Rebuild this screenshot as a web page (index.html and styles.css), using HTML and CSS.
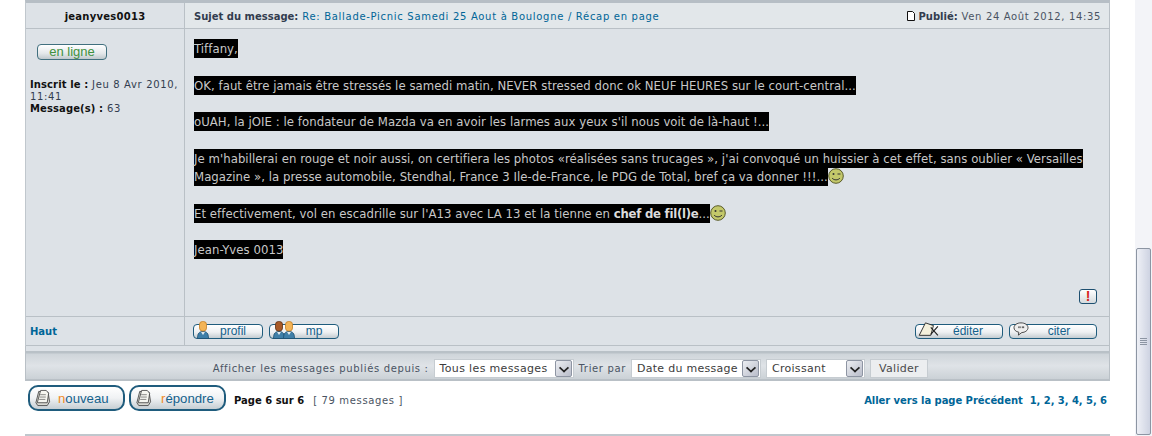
FILE: index.html
```html
<!DOCTYPE html>
<html lang="fr">
<head>
<meta charset="utf-8">
<title>Ballade-Picnic</title>
<link rel="stylesheet" href="styles.css">
</head>
<body>
<svg class="defs" width="0" height="0" aria-hidden="true">
  <defs>
    <symbol id="user" viewBox="0 0 12 18">
      <path d="M.5 17.500c0-5 1.500-7 5.500-7s5.500 2 5.500 7z" fill="#3f7fa8" stroke="#1d4f70" stroke-width=".8"/>
      <path d="M4 11l2 3 2-3z" fill="#dfeaf0"/>
      <rect x="2.500" y=".5" width="7" height="9.500" rx="3" fill="#f3b457" stroke="#c47f24" stroke-width=".8"/>
    </symbol>
    <symbol id="user2" viewBox="0 0 12 18">
      <path d="M.5 17.500c0-5 1.500-7 5.500-7s5.500 2 5.500 7z" fill="#3f7fa8" stroke="#1d4f70" stroke-width=".8"/>
      <path d="M4 11l2 3 2-3z" fill="#dfeaf0"/>
      <rect x="2.500" y=".5" width="7" height="9.500" rx="3" fill="#a85a28" stroke="#5d2f12" stroke-width=".8"/>
    </symbol>
    <symbol id="doc" viewBox="0 0 18 18">
      <path d="M5 2l10 1 1.500 10-2.500 4H4l-2-3z" fill="#d8d8d2" stroke="#333" stroke-width=".8"/>
      <path d="M7 1h6l2.500 3-1.500 10H3.500z" fill="#f6f6f0" stroke="#333" stroke-width=".8"/>
      <path d="M6.500 5.500h6M6 8h6.500M5.500 10.500h6.500" stroke="#666" stroke-width=".8"/>
    </symbol>
    <symbol id="smile" viewBox="0 0 16 16">
      <circle cx="8" cy="8" r="7.300" fill="#c3c86a" stroke="#5a5c2b"/>
      <circle cx="5.500" cy="6" r="1" fill="#333"/>
      <path d="M9.500 6h3" stroke="#333"/>
      <path d="M4 10c2 2.500 6 2.500 8 0" fill="none" stroke="#333"/>
    </symbol>
  </defs>
</svg>

<main class="page">
  <section class="post">
    <div class="cell author">jeanyves0013</div>
    <div class="cell subject">
      <span class="subject-main"><b>Sujet du message:</b> <a href="#">Re: Ballade-Picnic Samedi 25 Aout à Boulogne / Récap en page</a></span>
      <span class="posted">
        <svg class="mini-doc" viewBox="0 0 8 10"><path d="M.5.5h5l2 2v7h-7z" fill="#fff" stroke="#111"/></svg>
        <b>Publié:</b> Ven 24 Août 2012, 14:35
      </span>
    </div>

    <div class="cell profile">
      <span class="online">en ligne</span>
      <p class="stats"><b>Inscrit le :</b> Jeu 8 Avr 2010, 11:41<br><b>Message(s) :</b> 63</p>
    </div>
    <div class="cell message">
      <div class="text">
        <p><span class="hl">Tiffany,</span></p>
        <p><span class="hl">OK, faut être jamais être stressés le samedi matin, NEVER stressed donc ok NEUF HEURES sur le court-central...</span></p>
        <p><span class="hl">oUAH, la jOIE : le fondateur de Mazda va en avoir les larmes aux yeux s'il nous voit de là-haut !...</span></p>
        <p><span class="hl">Je m'habillerai en rouge et noir aussi, on certifiera les photos «réalisées sans trucages », j'ai convoqué un huissier à cet effet, sans oublier « Versailles Magazine », la presse automobile, Stendhal, France 3 Ile-de-France, le PDG de Total, bref ça va donner !!!...</span><svg class="smiley"><use href="#smile"/></svg></p>
        <p><span class="hl">Et effectivement, vol en escadrille sur l'A13 avec LA 13 et la tienne en <b>chef de fil(l)e</b>...</span><svg class="smiley"><use href="#smile"/></svg></p>
        <p><span class="hl">Jean-Yves 0013</span></p>
      </div>
      <div class="report"><span class="alert">!</span></div>
    </div>

    <div class="cell top"><a href="#">Haut</a></div>
    <div class="cell actions">
      <div class="btn-group">
        <a class="btn" href="#"><svg class="btn-ic one"><use href="#user"/></svg>profil</a>
        <a class="btn two" href="#"><svg class="btn-ic one"><use href="#user2"/></svg><svg class="btn-ic second"><use href="#user"/></svg>mp</a>
      </div>
      <div class="btn-group">
        <a class="btn wide edit-btn" href="#">
          <svg class="btn-ic edit" viewBox="0 0 24 18"><path d="M1 15L8 1l9 3-3 11z" fill="#f4f0dc" stroke="#222"/><path d="M14 6l8 9M22 5l-8 9" stroke="#222" stroke-width="1.300"/></svg>éditer</a>
        <a class="btn wide quote-btn" href="#">
          <svg class="btn-ic quote" viewBox="0 0 18 16"><path d="M9 1c4.500 0 8 2.300 8 5.500S13.500 12 10 12l-4 3 .5-3.300C3 11 1 9 1 6.500 1 3.300 4.500 1 9 1z" fill="#eee" stroke="#333"/><path d="M6.500 5v2M8 5v2M10.500 5v2M12 5v2" stroke="#333"/></svg>citer</a>
      </div>
    </div>
  </section>

  <form class="filter">
    <label>Afficher les messages publiés depuis :</label>
    <span class="select s1">Tous les messages<i class="arrow"></i></span>
    <label>Trier par</label>
    <span class="select s2">Date du message<i class="arrow"></i></span>
    <span class="select s3">Croissant<i class="arrow"></i></span>
    <span class="submit">Valider</span>
  </form>

  <div class="pager">
    <a class="big" href="#"><svg class="big-ic"><use href="#doc"/></svg><span><em>n</em>ouveau</span></a>
    <a class="big reply" href="#"><svg class="big-ic"><use href="#doc"/></svg><span><em>r</em>épondre</span></a>
    <span class="count"><b>Page 6 sur 6</b><span class="total">[ 79 messages ]</span></span>
    <span class="goto"><a href="#">Aller vers la page Précédent</a>&nbsp; <a href="#">1, 2, 3, 4, 5, 6</a></span>
  </div>
  <div class="rule"></div>
</main>

<div class="scrollbar"><div class="thumb"><div class="grip"></div></div></div>
</body>
</html>
```
FILE: styles.css
```css
* { box-sizing: border-box; }
html, body { margin: 0; height: 436px; overflow: hidden; background: #fff; }
body { font-family: "DejaVu Sans", sans-serif; font-size: 10px; color: #323d4f; letter-spacing: .65px; }
b { font-weight: bold; letter-spacing: 0; }
a { color: #006597; text-decoration: none; }
.defs { position: absolute; }

.page { width: 1110px; padding-left: 25px; }

.post {
  display: grid;
  grid-template-columns: 159px 1fr;
  grid-template-rows: 26px 288px 29px;
  background: #dde2e7;
  border-top: 3px solid #b6bec5;
  border-left: 1px solid #c0c7cd;
  border-right: 1px solid #b9c0c6;
}
.cell { border-bottom: 1px solid #b9c0c6; }
.author, .profile, .top { border-right: 1px solid #b9c0c6; }

.author { display: flex; align-items: center; justify-content: center; font-weight: bold; color: #111; padding-top: 1px; letter-spacing: .25px; }
.subject { display: flex; align-items: center; justify-content: space-between; padding: 1px 8px 0 9px; background: #e2e7ea; }
.subject-main a { letter-spacing: .7px; }
.subject-main b, .posted b { color: #323d4f; }
.mini-doc { width: 8px; height: 10px; vertical-align: -1px; }
.posted { color: #4a5463; }

.profile { padding: 15px 4px 0; }
.online {
  display: block;
  width: 70px; height: 16px; margin-left: 7px;
  border: 1px solid #41707f; border-radius: 4px;
  background: linear-gradient(#fff, #e4e8ea 60%, #bfc8cc);
  color: #3f9141;
  font: 13px/14px "Liberation Sans", sans-serif;
  letter-spacing: 0;
  text-align: center;
}
.stats { margin: 19px 0 0; line-height: 12px; color: #323d4f; }
.stats b { color: #111; letter-spacing: .1px; }

.message { display: flex; flex-direction: column; justify-content: space-between; padding: 11px 0 0 9px; }
.text { font-family: "DejaVu Sans Condensed", "DejaVu Sans", sans-serif; font-size: 13px; line-height: 18.2px; color: #c8c8c8; letter-spacing: .05px; padding-right: 20px; }
.text p { margin: 0 0 18.4px; }
.hl { background: #000; padding: 2px 0; -webkit-box-decoration-break: clone; box-decoration-break: clone; }
.hl b { color: #dcdcdc; letter-spacing: -.25px; }
.smiley { width: 16px; height: 16px; margin: -6px 0; vertical-align: 3px; }
.report { display: flex; justify-content: flex-end; padding: 0 12px 12px 0; }
.alert {
  width: 18px; height: 15px;
  border: 1px solid #1d4f70; border-radius: 3px;
  background: linear-gradient(#fff, #d5dadd);
  color: #d81f1f;
  font: bold 14px/13px "Liberation Sans", sans-serif;
  letter-spacing: 0;
  text-align: center;
}

.top { display: flex; align-items: center; padding: 1px 4px 0; font-weight: bold; letter-spacing: 0; }
.actions { display: flex; align-items: flex-start; justify-content: space-between; padding: 7px 12px 0 8px; }
.btn-group { display: flex; gap: 6px; }
.btn {
  position: relative;
  display: block;
  width: 70px; height: 15px;
  border: 1px solid #1f5c7d; border-radius: 4px;
  background: linear-gradient(#fff, #eef0f2 55%, #c4ccd1);
  color: #14618c;
  font: 12px/13px "Liberation Sans", sans-serif;
  letter-spacing: 0;
  text-align: center;
  padding-left: 10px;
}
.btn.two { padding-left: 20px; }
.btn.wide { width: 88px; }
.btn.edit-btn { padding-left: 18px; }
.btn.quote-btn { padding-left: 12px; }
.btn-ic { position: absolute; top: -4px; left: 3px; width: 12px; height: 18px; overflow: visible; }
.btn-ic.second { left: 13px; }
.btn-ic.edit { width: 22px; height: 16px; top: -3px; left: 2px; }
.btn-ic.quote { width: 16px; height: 14px; top: -3px; left: 3px; }

.filter {
  display: flex; align-items: center; gap: 5px;
  justify-content: flex-end;
  height: 35px;
  padding: 11px 181px 0 0;
  background: linear-gradient(#dde2e7 0, #dde2e7 5px, #b9c1c7 5px, #b9c1c7 7px, #cfd5da 8px, #dfe3e7 60%, #cbd1d6);
  border: 1px solid #b9c0c6; border-top: 0;
  border-bottom: 2px solid #b9c0c6;
  color: #4a5463;
}
.select {
  position: relative;
  display: block;
  height: 19px;
  background: #fff; border: 1px solid #c6ccd1;
  font-size: 11px; line-height: 17px;
  letter-spacing: .28px;
  padding-left: 5px;
  color: #3c3c3c;
}
.s1 { width: 140px; letter-spacing: .35px; }
.s2 { width: 130px; }
.s3 { width: 99px; }
.arrow {
  position: absolute; right: 1px; top: 0;
  width: 17px; height: 17px;
  background: linear-gradient(135deg, #eceef2, #b9bdca);
  border: 1px solid #8e95a3; border-radius: 2px;
}
.arrow::after {
  content: ""; position: absolute; left: 4px; top: 3px;
  width: 6px; height: 6px;
  border-right: 2px solid #222; border-bottom: 2px solid #222;
  transform: scale(.9, .8) rotate(45deg);
}
.submit {
  display: block; width: 58px; height: 19px;
  border: 1px solid #c6ccd1;
  background: #eceef0;
  font-size: 11px; line-height: 17px; letter-spacing: .28px; text-align: center; color: #4a4a4a;
}

.pager { display: flex; align-items: center; height: 36px; padding-top: 2px; }
.big {
  display: flex; align-items: center;
  width: 97px; height: 26px; margin: 0 0 4px 3px;
  border: 2px solid #1f5c7d; border-radius: 10px;
  background: linear-gradient(#fff, #f0f2f4 50%, #c6ced3);
  font: 13.200px "Liberation Sans", sans-serif;
  letter-spacing: 0;
  color: #14618c;
  padding-left: 4px;
}
.big.reply { margin-left: 4px; }
.big em { font-style: normal; color: #f08a24; }
.big span { margin-left: 7px; }
.big.reply span { margin-left: 9px; }
.big-ic { width: 17px; height: 18px; flex: none; }
.count { margin-left: 8px; color: #4a5463; }
.count b { color: #111; }
.total { margin-left: 9px; }
.goto { margin-left: auto; padding-right: 3px; font-weight: bold; letter-spacing: -.05px; }

.rule { margin-top: 17px; height: 2px; background: #c0c7cd; }

.scrollbar { position: fixed; right: 0; top: 0; width: 17px; height: 436px; background: #f3f4f8; }
.thumb {
  position: absolute; left: 1px; top: 248px; width: 15px; height: 187px;
  border: 1px solid #8c95a3; border-radius: 2px;
  background: linear-gradient(90deg, #eef0f6, #ced3e2);
  display: flex; align-items: center; justify-content: center;
}
.grip { width: 7px; height: 7px; background: repeating-linear-gradient(#8c95a3 0 1px, transparent 1px 2px); }
```
